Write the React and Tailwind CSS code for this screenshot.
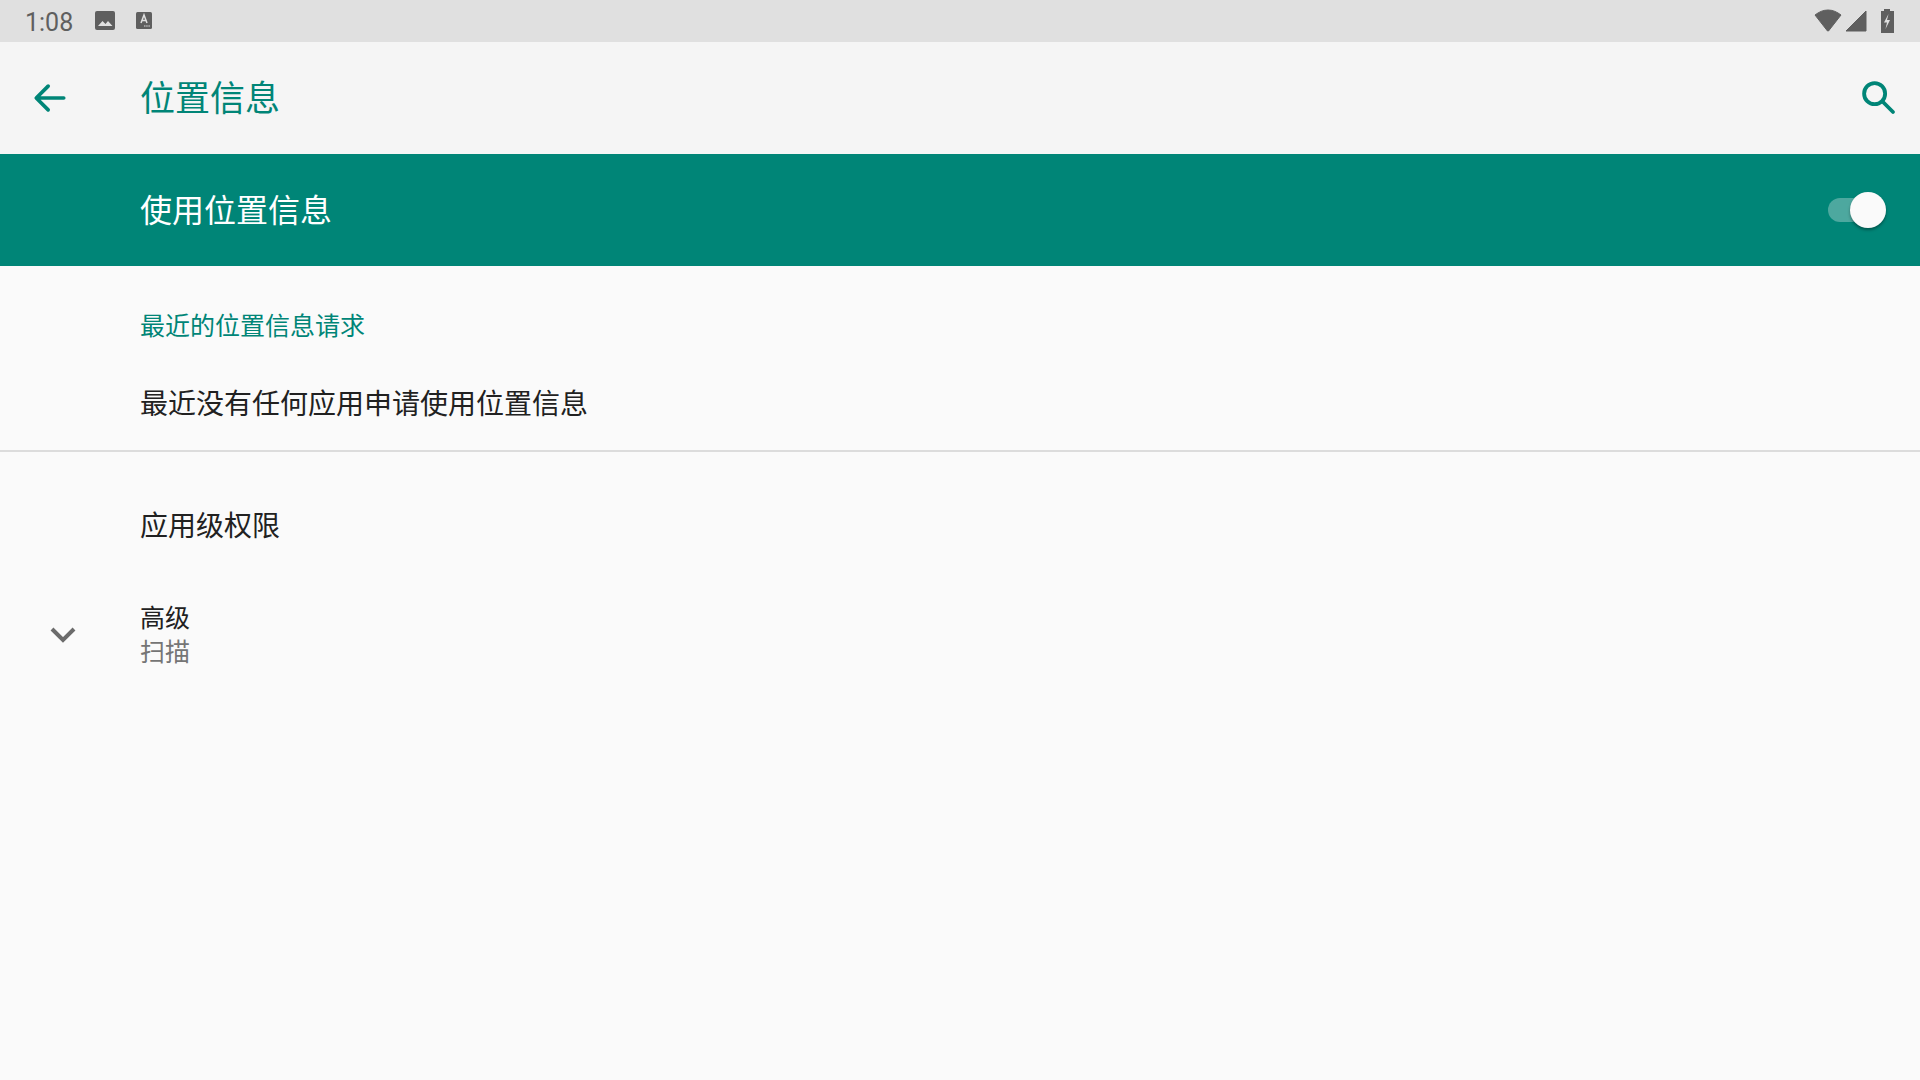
export default function App() {
  return (
    <div className="w-[1920px] h-[1080px] overflow-hidden flex flex-col bg-[#fafafa] font-['Roboto','Noto_Sans_CJK_SC',sans-serif]">
      <div className="h-[42px] bg-[#e0e0e0] flex items-center pl-[25px] pr-[24px] text-[#5f5f5f]">
        <span className="text-[25px] leading-none w-[50px] mt-[3px]">1:08</span>
        <svg className="ml-[19px] mb-[1px]" width="22" height="21" viewBox="0 0 22 21"><rect x="1" y="1" width="20" height="19" rx="2" fill="#5f5f5f"/><path d="M4 16l4.500-5 3 3 2.500-3 4.500 5z" fill="#e0e0e0"/></svg>
        <svg className="ml-[19px] mb-[1px]" width="18" height="19" viewBox="0 0 18 19"><rect x="1" y="1" width="16" height="17" rx="1.500" fill="#5f5f5f"/><path d="M6 12L9 4l3 8M7 9.500h4" fill="none" stroke="#e0e0e0" strokeWidth="1.500"/><path d="M9 15h6" stroke="#e0e0e0" strokeWidth="1.200" strokeDasharray="1.500 .7"/></svg>
        <div className="flex-1" />
        <svg width="30" height="24" viewBox="0 0 30 24"><path d="M2 6C6 3 10 1 15 1s9 2 13 5L15.500 22h-1z" fill="#5f5f5f" stroke="#5f5f5f" strokeWidth="1" strokeLinejoin="round"/></svg>
        <svg className="ml-[2px]" width="22" height="22" viewBox="0 0 22 22"><path d="M1 21L21 1v20z" fill="#5f5f5f" stroke="#5f5f5f" strokeLinejoin="round"/></svg>
        <svg className="ml-[13px] mr-[2px]" width="14" height="24" viewBox="0 0 14 24"><path d="M4 0h6v2h4v22H1V2h3z" fill="#5f5f5f" /><path d="M8.500 5L4 13.500h3L5.500 20 10 11H7z" fill="#e0e0e0"/></svg>
      </div>
      <div className="h-[112px] bg-[#f5f5f5] flex items-center text-[#008577]">
        <div className="w-[140px] pl-[31px] flex items-center">
          <svg width="44" height="44" viewBox="0 0 24 24" fill="none" stroke="currentColor" strokeWidth="2" strokeLinecap="round" strokeLinejoin="round" className="-ml-[3px]"><path d="M19.500 12H5M11 5.500L4.500 12l6.500 6.500" /></svg>
        </div>
        <span className="text-[35px] leading-none flex-1 mt-[2px]">位置信息</span>
        <svg className="mr-[20px]" width="42" height="42" viewBox="0 0 24 24" fill="none" stroke="#008577" strokeWidth="2.200" strokeLinecap="round"><circle cx="9.500" cy="9.500" r="6"/><path d="M14 14l6 6"/></svg>
      </div>
      <div className="h-[112px] bg-[#008577] flex items-center pl-[140px] pr-[35px] text-white">
        <span className="text-[32px] leading-none flex-1 mt-[2px]">使用位置信息</span>
        <div className="relative w-[58px] h-[24px] rounded-full bg-[#4da89f] -mr-[1px]">
          <div className="absolute right-0 -top-[6px] w-[36px] h-[36px] rounded-full bg-[#fafafa] shadow-[0_2px_3px_rgba(0,0,0,0.35)]" />
        </div>
      </div>
      <div className="h-[186px] pl-[140px] border-b-[2px] border-[#dcdcdc] flex flex-col">
        <span className="text-[25px] leading-none mt-[48px] text-[#008577]">最近的位置信息请求</span>
        <span className="text-[28px] leading-none mt-[52px] text-[#212121]">最近没有任何应用申请使用位置信息</span>
      </div>
      <div className="h-[112px] pl-[140px] flex items-center text-[28px] leading-none text-[#212121] mt-[19px]">应用级权限</div>
      <div className="flex items-center h-[108px] -mt-[2px]">
        <div className="w-[140px] pl-[48px] flex items-center">
          <svg width="30" height="30" viewBox="0 0 30 30" fill="none" stroke="#6b6b6b" strokeWidth="4"><path d="M4 9l11 11L26 9"/></svg>
        </div>
        <div className="flex flex-col text-[25px] leading-[34px] mt-[2px]">
          <span className="text-[#212121]">高级</span>
          <span className="text-[#757575]">扫描</span>
        </div>
      </div>
    </div>
  );
}
